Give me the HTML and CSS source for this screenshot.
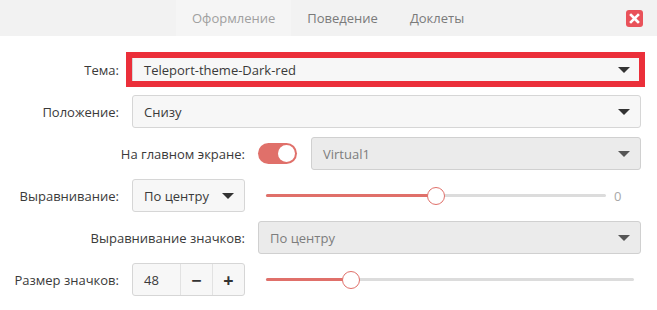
FILE: index.html
```html
<!DOCTYPE html>
<html lang="ru">
<head>
    <meta charset="UTF-8">
    <title>Настройки панели</title>
    <link rel="stylesheet" href="styles.css">
</head>
<body>

    <!-- Tabs header -->
    <div class="header">
        <div class="tabs">
            <span class="tab active">Оформление</span>
            <span class="tab">Поведение</span>
            <span class="tab">Доклеты</span>
        </div>
        <button class="close-btn" title="Закрыть">
            <svg width="17" height="17" viewBox="0 0 17 17">
                <path d="M5 5 L12 12 M12 5 L5 12" stroke="#ffffff" stroke-width="2.6" stroke-linecap="square"/>
            </svg>
        </button>
    </div>

    <!-- Settings grid -->
    <div class="settings">
        <label class="label">Тема:</label>
        <div class="combo wide highlighted">
            <span>Teleport-theme-Dark-red</span>
            <span class="arrow"></span>
        </div>

        <label class="label">Положение:</label>
        <div class="combo wide">
            <span>Снизу</span>
            <span class="arrow"></span>
        </div>

        <label class="label span2">На главном экране:</label>
        <div class="screen-row">
            <div class="switch"><div class="knob"></div></div>
            <div class="combo disabled grow">
                <span>Virtual1</span>
                <span class="arrow"></span>
            </div>
        </div>

        <label class="label">Выравнивание:</label>
        <div class="combo">
            <span>По центру</span>
            <span class="arrow"></span>
        </div>
        <div class="slider-row">
            <div class="slider">
                <div class="fill" style="width: 50%"></div>
                <div class="thumb" style="left: 50%"></div>
            </div>
            <span class="slider-value">0</span>
        </div>

        <label class="label span2">Выравнивание значков:</label>
        <div class="combo disabled">
            <span>По центру</span>
            <span class="arrow"></span>
        </div>

        <label class="label">Размер значков:</label>
        <div class="spin">
            <span class="spin-value">48</span>
            <span class="spin-btn">&minus;</span>
            <span class="spin-btn">+</span>
        </div>
        <div class="slider-row">
            <div class="slider">
                <div class="fill" style="width: 23%"></div>
                <div class="thumb" style="left: 23%"></div>
            </div>
        </div>
    </div>

</body>
</html>
```

FILE: styles.css
```css
body {
    margin: 0;
    background-color: #ffffff;
    font-family: "Open Sans", "DejaVu Sans", sans-serif;
    font-size: 13px;
    color: #3a3a3a;
}

.header {
    height: 36px;
    background-color: #f2f2f2;
    display: flex;
    align-items: center;
    position: relative;
}

.tabs {
    display: flex;
    height: 100%;
    margin-left: 176px;
}

.tab {
    display: flex;
    align-items: center;
    padding: 0 16px;
    color: #7a7a7a;
}

.tab.active {
    background-color: #f5f5f5;
    color: #a0a0a0;
}

.close-btn {
    margin-left: auto;
    margin-right: 14px;
    width: 17px;
    height: 17px;
    padding: 0;
    border: none;
    border-radius: 3px;
    background-color: #e9525a;
    display: flex;
}

.settings {
    display: grid;
    grid-template-columns: 119px 113px 1fr;
    grid-auto-rows: 33px;
    column-gap: 13px;
    row-gap: 9px;
    padding: 17px 16px 0 0;
}

.label {
    display: flex;
    align-items: center;
    justify-content: flex-end;
    color: #3a3a3a;
}

.label.span2 {
    grid-column: span 2;
}

.combo {
    display: flex;
    align-items: center;
    justify-content: space-between;
    padding: 0 10px 0 11px;
    background-color: #f7f7f7;
    border: 1px solid #d6d6d6;
    border-radius: 3px;
    color: #3a3a3a;
    position: relative;
}

.combo.wide {
    grid-column: span 2;
}

.combo.disabled {
    background-color: #ebebeb;
    border-color: #d0d0d0;
    color: #7d7d7d;
}

.combo.highlighted::after {
    content: "";
    position: absolute;
    top: -2px;
    bottom: -2px;
    left: -7px;
    right: -5px;
    border: 6px solid #eb2f3a;
}

.arrow {
    width: 0;
    height: 0;
    border-left: 6px solid transparent;
    border-right: 6px solid transparent;
    border-top: 6px solid #333333;
}

.combo.disabled .arrow {
    border-top-color: #555555;
}

.screen-row {
    display: flex;
    align-items: center;
    gap: 14px;
}

.screen-row .grow {
    flex: 1;
    align-self: stretch;
}

.switch {
    width: 39px;
    height: 21px;
    border-radius: 11px;
    background-color: #e0706a;
    display: flex;
    align-items: center;
    justify-content: flex-end;
    padding-right: 2px;
    box-sizing: border-box;
}

.knob {
    width: 17px;
    height: 17px;
    border-radius: 50%;
    background-color: #ffffff;
}

.slider-row {
    display: flex;
    align-items: center;
    padding: 0 7px 0 8px;
}

.slider {
    flex: 1;
    height: 3px;
    background-color: #dcdcdc;
    position: relative;
    border-radius: 2px;
}

.fill {
    height: 100%;
    background-color: #e0706a;
    border-radius: 2px;
}

.thumb {
    position: absolute;
    top: 50%;
    width: 16px;
    height: 16px;
    margin: -9px 0 0 -9px;
    border-radius: 50%;
    background-color: #ffffff;
    border: 1px solid #e0706a;
}

.slider-value {
    width: 28px;
    padding-left: 8px;
    box-sizing: border-box;
    color: #a8a8a8;
}

.spin {
    display: flex;
    background-color: #f7f7f7;
    border: 1px solid #d6d6d6;
    border-radius: 3px;
    margin-top: 0;
}

.spin-value {
    width: 47px;
    display: flex;
    align-items: center;
    padding-left: 11px;
    box-sizing: border-box;
    color: #3a3a3a;
}

.spin-btn {
    flex: 1;
    display: flex;
    align-items: center;
    justify-content: center;
    border-left: 1px solid #e2e2e2;
    font-size: 18px;
    font-weight: bold;
    color: #333333;
}
```
